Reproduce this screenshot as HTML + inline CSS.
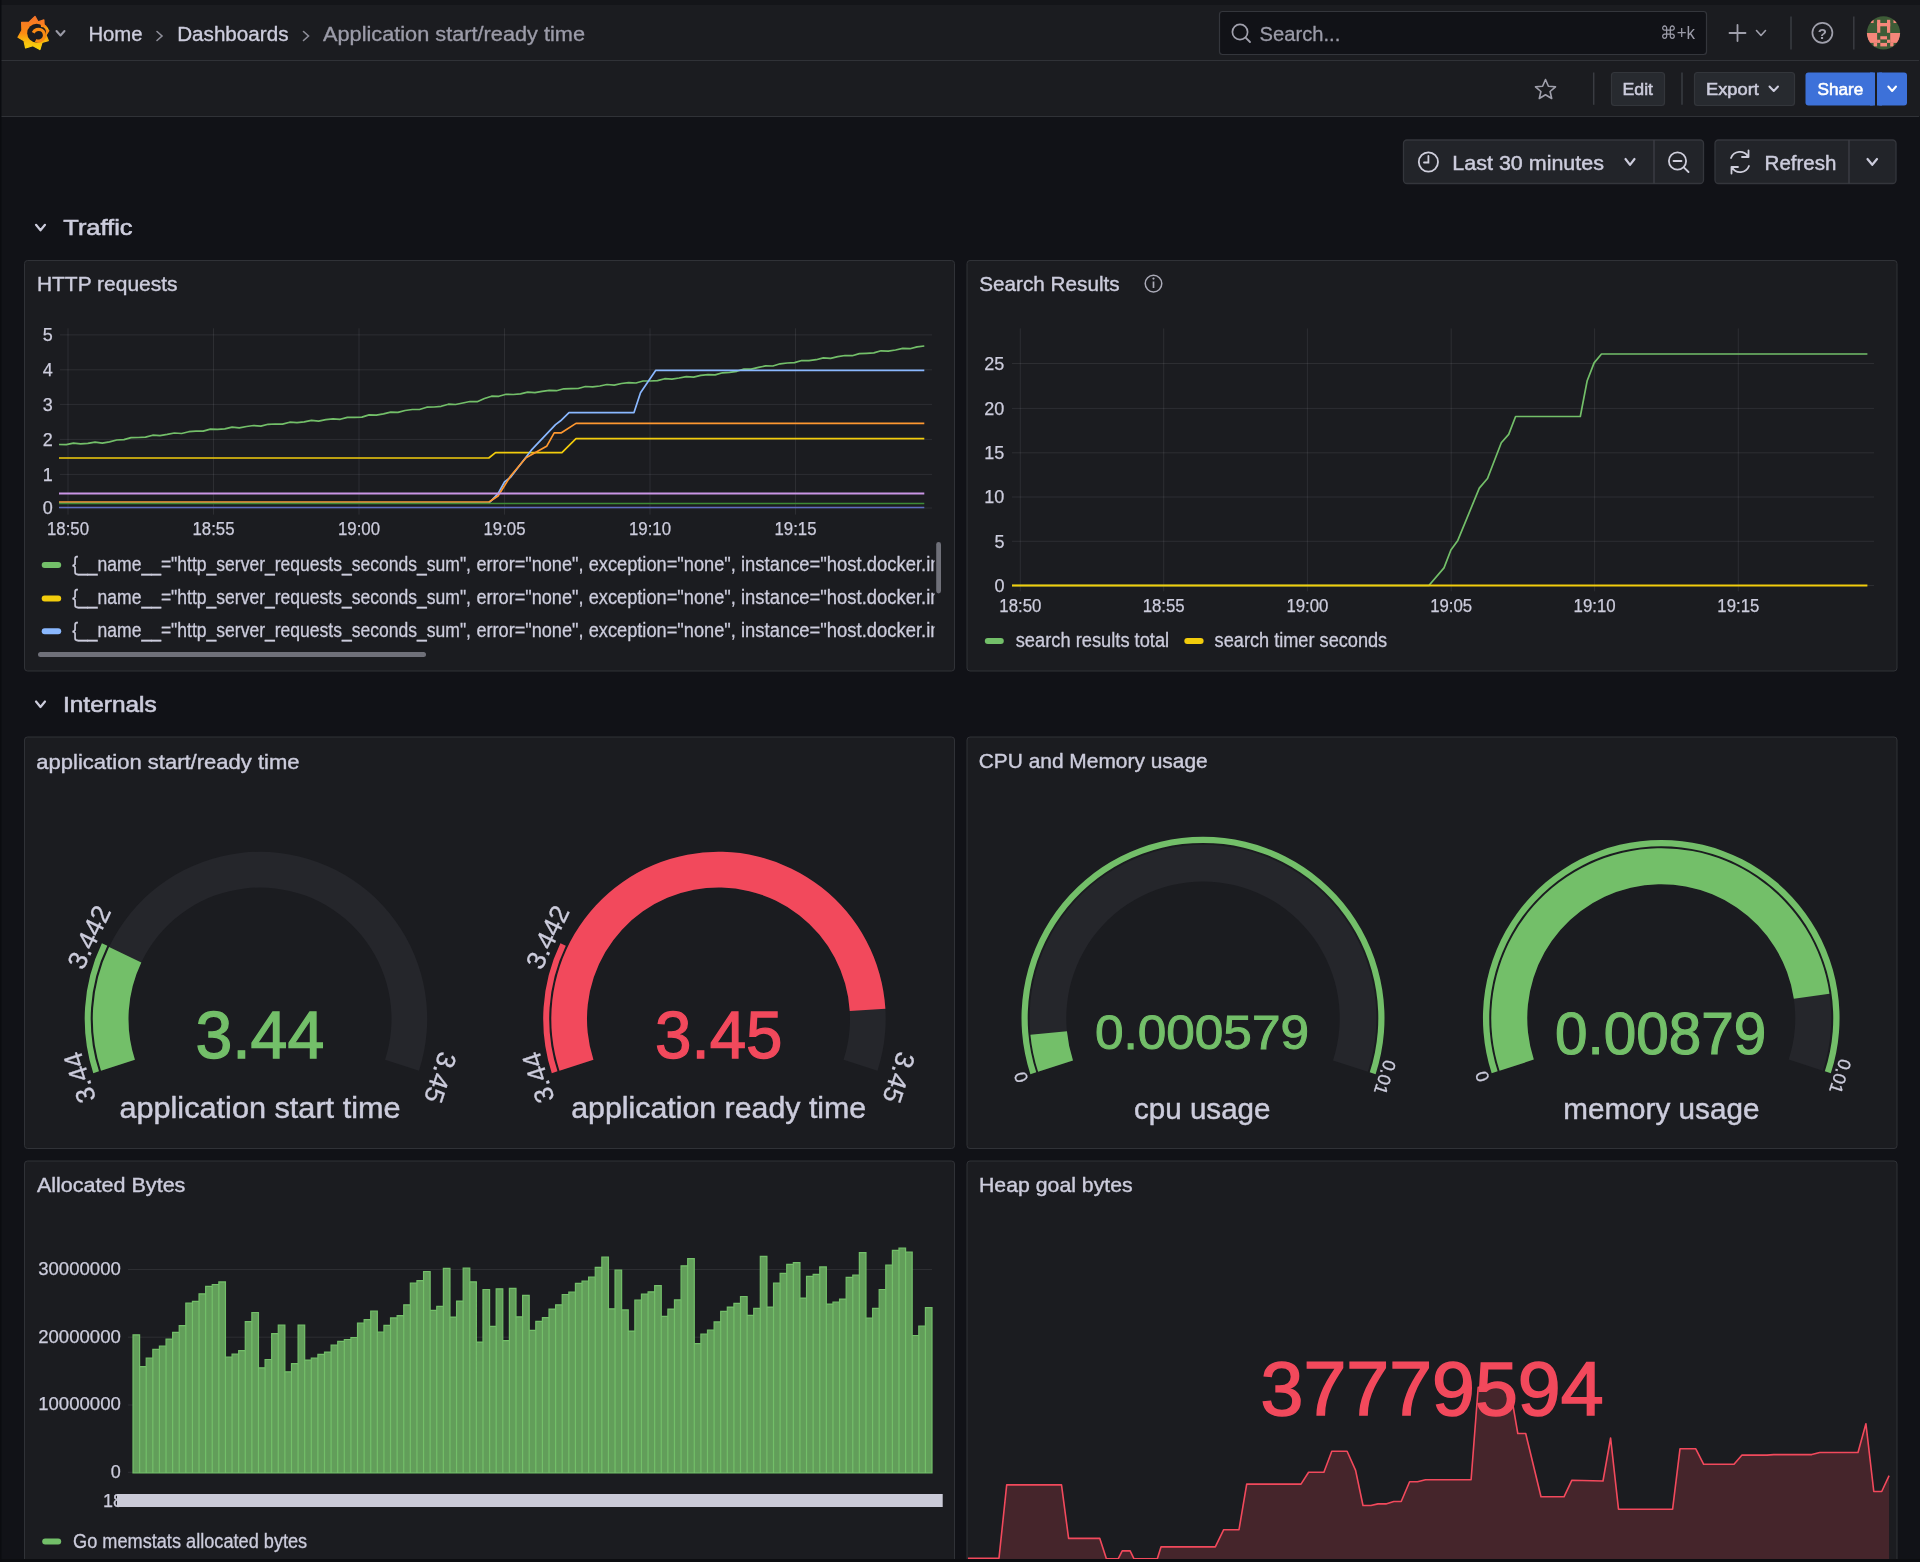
<!DOCTYPE html>
<html><head><meta charset="utf-8"><title>Application start/ready time - Dashboards - Grafana</title>
<style>
html,body{margin:0;padding:0;background:#111217;width:1920px;height:1562px;overflow:hidden}
svg{display:block;font-family:"Liberation Sans", sans-serif;will-change:transform}
</style></head>
<body>
<svg width="1920" height="1562" viewBox="0 0 1920 1562">
<rect x="0" y="0" width="1920" height="1562" fill="#111217" />
<rect x="0" y="0" width="1920" height="61" fill="#1b1c20" />
<rect x="0" y="0" width="1920" height="5" fill="#141519" />
<line x1="0" y1="60.5" x2="1919" y2="60.5" stroke="#303237" stroke-width="1" />
<rect x="0" y="61" width="1920" height="55.5" fill="#1b1c20" />
<line x1="0" y1="116.5" x2="1919" y2="116.5" stroke="#303237" stroke-width="1" />
<defs>
<linearGradient id="lg" x1="0" y1="1" x2="0" y2="0">
<stop offset="0" stop-color="#f8d80c"/><stop offset="0.3" stop-color="#f9b40e"/><stop offset="0.5" stop-color="#fb8a12"/><stop offset="1" stop-color="#f7742a"/>
</linearGradient>
<clipPath id="avc"><circle cx="1883.5" cy="32.9" r="16.6"/></clipPath>
</defs>
<polygon points="35.0,16.4 38.1,21.9 43.9,19.9 44.2,26.9 48.9,30.6 46.0,35.1 48.3,40.6 42.0,42.5 39.9,49.6 32.9,45.7 25.6,48.0 24.0,40.8 18.0,37.2 21.9,30.3 21.6,22.3 29.2,22.0" fill="url(#lg)" stroke="url(#lg)" stroke-width="1.2" stroke-linejoin="round"/>
<circle cx="36.6" cy="33.2" r="9.4" fill="#1b1c20"/>
<path d="M40.5,22.6 Q47.5,24.5 48.9,30.8 Q45.5,27.2 41,27 Z" fill="url(#lg)"/>
<path d="M31.80,32.03 A7.5,7.5 0 1 1 34.85,41.70 L36.45,38.92 A4.3,4.3 0 1 0 34.70,33.38 Z" fill="#f98a14"/>
<polyline points="56.5,31 60.5,35.5 64.5,31" fill="none" stroke="#9a9aa6" stroke-width="2" stroke-linecap="round" stroke-linejoin="round"/>
<text x="88.4" y="40.9" font-size="20.5" fill="#ccccdc" textLength="54.2" lengthAdjust="spacingAndGlyphs" stroke="#ccccdc" stroke-width="0.35" >Home</text>
<polyline points="157,31.5 162,36 157,40.5" fill="none" stroke="#8e8e99" stroke-width="1.6" stroke-linecap="round"/>
<text x="177.2" y="40.9" font-size="20.5" fill="#ccccdc" textLength="111.3" lengthAdjust="spacingAndGlyphs" stroke="#ccccdc" stroke-width="0.35" >Dashboards</text>
<polyline points="303.5,31.5 308.5,36 303.5,40.5" fill="none" stroke="#8e8e99" stroke-width="1.6" stroke-linecap="round"/>
<text x="323.0" y="40.9" font-size="20.5" fill="#9b9ba8" textLength="262.0" lengthAdjust="spacingAndGlyphs" stroke="#9b9ba8" stroke-width="0.35" >Application start/ready time</text>
<rect x="1219.5" y="11.5" width="487" height="43" fill="#111217" rx="3" stroke="#34363c" stroke-width="1.2" />
<circle cx="1240" cy="32" r="7.6" fill="none" stroke="#a0a0ac" stroke-width="1.7"/>
<line x1="1245.6" y1="37.6" x2="1250" y2="42" stroke="#a0a0ac" stroke-width="1.8" stroke-linecap="round"/>
<text x="1259.6" y="40.5" font-size="20.5" fill="#9b9ba8" textLength="80.7" lengthAdjust="spacingAndGlyphs" stroke="#9b9ba8" stroke-width="0.3" >Search...</text>
<text x="1659.7" y="39.4" font-size="18" fill="#9b9ba8" textLength="35.3" lengthAdjust="spacingAndGlyphs" >⌘+k</text>
<line x1="1729.5" y1="33" x2="1745.5" y2="33" stroke="#a0a0ac" stroke-width="1.8" stroke-linecap="round"/>
<line x1="1737.5" y1="25" x2="1737.5" y2="41" stroke="#a0a0ac" stroke-width="1.8" stroke-linecap="round"/>
<polyline points="1756.5,30.5 1761.0,35.5 1765.5,30.5" fill="none" stroke="#a0a0ac" stroke-width="1.6" stroke-linecap="round" stroke-linejoin="round"/>
<line x1="1791" y1="16.5" x2="1791" y2="49.5" stroke="#3a3c42" stroke-width="1.5" />
<circle cx="1822.4" cy="32.8" r="10" fill="none" stroke="#a0a0ac" stroke-width="1.7"/>
<text x="1822.4" y="38.6" font-size="15" fill="#a0a0ac" text-anchor="middle" font-weight="bold">?</text>
<line x1="1853.8" y1="16.5" x2="1853.8" y2="49.5" stroke="#3a3c42" stroke-width="1.5" />
<g clip-path="url(#avc)">
<rect x="1866" y="15" width="36" height="36" fill="#3e5c37" />
<rect x="1877.1" y="19.8" width="3.2" height="13.0" fill="#f6877a" />
<rect x="1887" y="19.8" width="3.2" height="13.0" fill="#f6877a" />
<rect x="1877.1" y="23" width="13.1" height="3.3" fill="#f6877a" />
<rect x="1870.3" y="19.8" width="3.3" height="3.2" fill="#f6877a" />
<rect x="1893.5" y="19.8" width="3.5" height="3.2" fill="#f6877a" />
<rect x="1866" y="33" width="11.1" height="9.9" fill="#f6877a" />
<rect x="1877.1" y="39.7" width="3.2" height="3.2" fill="#f6877a" />
<rect x="1873.6" y="42.9" width="3.5" height="3.5" fill="#f6877a" />
<rect x="1890.2" y="33" width="10.8" height="9.9" fill="#f6877a" />
<rect x="1887" y="39.7" width="3.2" height="3.2" fill="#f6877a" />
<rect x="1890.2" y="42.9" width="3.3" height="3.5" fill="#f6877a" />
<rect x="1880.3" y="36.2" width="6.7" height="3.2" fill="#f6877a" />
<rect x="1880.3" y="42.9" width="6.7" height="3.5" fill="#f6877a" />
</g>
<polygon points="1545.5,79.5 1548.4,86.2 1555.5,86.8 1550.1,91.5 1551.7,98.5 1545.5,94.8 1539.3,98.5 1540.9,91.5 1535.5,86.8 1542.6,86.2" fill="none" stroke="#a0a0ac" stroke-width="1.6" stroke-linejoin="round"/>
<line x1="1593.7" y1="72.5" x2="1593.7" y2="104.8" stroke="#3a3c42" stroke-width="1.5" />
<rect x="1611.5" y="72.5" width="53" height="33" fill="#272a2f" rx="3" stroke="#33363b" stroke-width="1.2" />
<text x="1622.5" y="94.8" font-size="17" fill="#ccccdc" textLength="30.5" lengthAdjust="spacingAndGlyphs" stroke="#ccccdc" stroke-width="0.55" >Edit</text>
<line x1="1682" y1="72.5" x2="1682" y2="104.8" stroke="#3a3c42" stroke-width="1.5" />
<rect x="1694.5" y="72.5" width="100" height="33" fill="#272a2f" rx="3" stroke="#33363b" stroke-width="1.2" />
<text x="1706.0" y="94.8" font-size="17" fill="#ccccdc" textLength="52.8" lengthAdjust="spacingAndGlyphs" stroke="#ccccdc" stroke-width="0.55" >Export</text>
<polyline points="1769.5,86.5 1773.75,91 1778,86.5" fill="none" stroke="#ccccdc" stroke-width="2" stroke-linecap="round" stroke-linejoin="round"/>
<rect x="1805.5" y="72.5" width="69.5" height="33" fill="#3d71d9" rx="3" />
<rect x="1870" y="72.5" width="5" height="33" fill="#3d71d9" />
<rect x="1877" y="72.5" width="30" height="33" fill="#3d71d9" rx="3" />
<rect x="1877" y="72.5" width="5" height="33" fill="#3d71d9" />
<text x="1817.5" y="94.8" font-size="17" fill="#ffffff" textLength="45.9" lengthAdjust="spacingAndGlyphs" stroke="#ffffff" stroke-width="0.55" >Share</text>
<polyline points="1888.3,86.5 1892.15,91 1896,86.5" fill="none" stroke="#ffffff" stroke-width="2" stroke-linecap="round" stroke-linejoin="round"/>
<rect x="1403.5" y="140" width="300" height="43.5" fill="#222429" rx="3.5" stroke="#34363c" stroke-width="1.3" />
<line x1="1654" y1="140" x2="1654" y2="183.5" stroke="#3c3e45" stroke-width="1.4" />
<circle cx="1428.4" cy="162" r="9.6" fill="none" stroke="#cfcfdc" stroke-width="1.8"/>
<polyline points="1428.4,156 1428.4,162.5 1424,162.5" fill="none" stroke="#cfcfdc" stroke-width="1.8" stroke-linecap="round"/>
<text x="1452.3" y="170.0" font-size="20.5" fill="#ccccdc" textLength="151.7" lengthAdjust="spacingAndGlyphs" stroke="#ccccdc" stroke-width="0.45" >Last 30 minutes</text>
<polyline points="1625.5,159 1630.0,164.8 1634.5,159" fill="none" stroke="#ccccdc" stroke-width="2.2" stroke-linecap="round" stroke-linejoin="round"/>
<circle cx="1677.5" cy="161" r="8.6" fill="none" stroke="#cfcfdc" stroke-width="1.8"/>
<line x1="1673.5" y1="161" x2="1681.5" y2="161" stroke="#cfcfdc" stroke-width="1.8" stroke-linecap="round"/>
<line x1="1683.8" y1="167.3" x2="1688.5" y2="172" stroke="#cfcfdc" stroke-width="1.9" stroke-linecap="round"/>
<rect x="1715" y="140" width="181" height="43.5" fill="#222429" rx="3.5" stroke="#34363c" stroke-width="1.3" />
<line x1="1849" y1="140" x2="1849" y2="183.5" stroke="#3c3e45" stroke-width="1.4" />
<path d="M1731,158 A9.5,9.5 0 0 1 1748,156.5 M1748.5,150.5 L1748.5,157 L1742,157 M1749,166 A9.5,9.5 0 0 1 1732,167.5 M1731.5,173.5 L1731.5,167 L1738,167" fill="none" stroke="#cfcfdc" stroke-width="1.8" stroke-linecap="round" stroke-linejoin="round"/>
<text x="1764.6" y="170.0" font-size="20.5" fill="#ccccdc" textLength="71.8" lengthAdjust="spacingAndGlyphs" stroke="#ccccdc" stroke-width="0.45" >Refresh</text>
<polyline points="1867.5,159 1872.25,164.8 1877,159" fill="none" stroke="#ccccdc" stroke-width="2.2" stroke-linecap="round" stroke-linejoin="round"/>
<polyline points="36,224.8 40.5,230.3 45,224.8" fill="none" stroke="#ccccdc" stroke-width="2.2" stroke-linecap="round" stroke-linejoin="round"/>
<text x="63.3" y="234.8" font-size="22.5" fill="#ccccdc" textLength="69.2" lengthAdjust="spacingAndGlyphs" stroke="#ccccdc" stroke-width="0.6" >Traffic</text>
<polyline points="36,701.5 40.5,707 45,701.5" fill="none" stroke="#ccccdc" stroke-width="2.2" stroke-linecap="round" stroke-linejoin="round"/>
<text x="63.0" y="711.9" font-size="22.5" fill="#ccccdc" textLength="93.7" lengthAdjust="spacingAndGlyphs" stroke="#ccccdc" stroke-width="0.6" >Internals</text>
<rect x="24.5" y="260.5" width="930" height="410.5" fill="#1b1c20" rx="3" stroke="#303237" stroke-width="1" />
<rect x="967.0" y="260.5" width="930" height="410.5" fill="#1b1c20" rx="3" stroke="#303237" stroke-width="1" />
<rect x="24.5" y="737.0" width="930" height="411.5" fill="#1b1c20" rx="3" stroke="#303237" stroke-width="1" />
<rect x="967.0" y="737.0" width="930" height="411.5" fill="#1b1c20" rx="3" stroke="#303237" stroke-width="1" />
<rect x="24.5" y="1161.0" width="930" height="419" fill="#1b1c20" rx="3" stroke="#303237" stroke-width="1" />
<rect x="967.0" y="1161.0" width="930" height="419" fill="#1b1c20" rx="3" stroke="#303237" stroke-width="1" />
<text x="36.9" y="290.7" font-size="20.9" fill="#ccccdc" textLength="140.6" lengthAdjust="spacingAndGlyphs" stroke="#ccccdc" stroke-width="0.4" >HTTP requests</text>
<text x="979.3" y="291.3" font-size="20.9" fill="#ccccdc" textLength="140.3" lengthAdjust="spacingAndGlyphs" stroke="#ccccdc" stroke-width="0.4" >Search Results</text>
<circle cx="1153.5" cy="283.6" r="8.3" fill="none" stroke="#a9a9b6" stroke-width="1.5"/>
<line x1="1153.5" y1="281.5" x2="1153.5" y2="288" stroke="#a9a9b6" stroke-width="1.7" />
<circle cx="1153.5" cy="278.6" r="1.1" fill="#a9a9b6"/>
<text x="36.3" y="769.0" font-size="20.9" fill="#ccccdc" textLength="263.3" lengthAdjust="spacingAndGlyphs" stroke="#ccccdc" stroke-width="0.4" >application start/ready time</text>
<text x="978.7" y="768.0" font-size="20.9" fill="#ccccdc" textLength="229.0" lengthAdjust="spacingAndGlyphs" stroke="#ccccdc" stroke-width="0.4" >CPU and Memory usage</text>
<text x="36.9" y="1192.2" font-size="20.9" fill="#ccccdc" textLength="148.5" lengthAdjust="spacingAndGlyphs" stroke="#ccccdc" stroke-width="0.4" >Allocated Bytes</text>
<text x="979.0" y="1192.2" font-size="20.9" fill="#ccccdc" textLength="153.7" lengthAdjust="spacingAndGlyphs" stroke="#ccccdc" stroke-width="0.4" >Heap goal bytes</text>
<line x1="59.9" y1="334.9" x2="932" y2="334.9" stroke="rgba(204,204,220,0.10)" stroke-width="1" />
<line x1="59.9" y1="369.8" x2="932" y2="369.8" stroke="rgba(204,204,220,0.10)" stroke-width="1" />
<line x1="59.9" y1="404.4" x2="932" y2="404.4" stroke="rgba(204,204,220,0.10)" stroke-width="1" />
<line x1="59.9" y1="439.4" x2="932" y2="439.4" stroke="rgba(204,204,220,0.10)" stroke-width="1" />
<line x1="59.9" y1="474.4" x2="932" y2="474.4" stroke="rgba(204,204,220,0.10)" stroke-width="1" />
<line x1="59.9" y1="508" x2="932" y2="508" stroke="rgba(204,204,220,0.10)" stroke-width="1" />
<line x1="68" y1="328.3" x2="68" y2="514.6" stroke="rgba(204,204,220,0.10)" stroke-width="1" />
<line x1="213.5" y1="328.3" x2="213.5" y2="514.6" stroke="rgba(204,204,220,0.10)" stroke-width="1" />
<line x1="359" y1="328.3" x2="359" y2="514.6" stroke="rgba(204,204,220,0.10)" stroke-width="1" />
<line x1="504.5" y1="328.3" x2="504.5" y2="514.6" stroke="rgba(204,204,220,0.10)" stroke-width="1" />
<line x1="650" y1="328.3" x2="650" y2="514.6" stroke="rgba(204,204,220,0.10)" stroke-width="1" />
<line x1="795.5" y1="328.3" x2="795.5" y2="514.6" stroke="rgba(204,204,220,0.10)" stroke-width="1" />
<text x="52.8" y="341.1" font-size="18" fill="#ccccdc" text-anchor="end" stroke="#ccccdc" stroke-width="0.25" >5</text>
<text x="52.8" y="376.0" font-size="18" fill="#ccccdc" text-anchor="end" stroke="#ccccdc" stroke-width="0.25" >4</text>
<text x="52.8" y="410.6" font-size="18" fill="#ccccdc" text-anchor="end" stroke="#ccccdc" stroke-width="0.25" >3</text>
<text x="52.8" y="445.6" font-size="18" fill="#ccccdc" text-anchor="end" stroke="#ccccdc" stroke-width="0.25" >2</text>
<text x="52.8" y="480.6" font-size="18" fill="#ccccdc" text-anchor="end" stroke="#ccccdc" stroke-width="0.25" >1</text>
<text x="52.8" y="514.2" font-size="18" fill="#ccccdc" text-anchor="end" stroke="#ccccdc" stroke-width="0.25" >0</text>
<text x="68.0" y="534.7" font-size="18" fill="#ccccdc" textLength="42.0" lengthAdjust="spacingAndGlyphs" text-anchor="middle" stroke="#ccccdc" stroke-width="0.25" >18:50</text>
<text x="213.5" y="534.7" font-size="18" fill="#ccccdc" textLength="42.0" lengthAdjust="spacingAndGlyphs" text-anchor="middle" stroke="#ccccdc" stroke-width="0.25" >18:55</text>
<text x="359.0" y="534.7" font-size="18" fill="#ccccdc" textLength="42.0" lengthAdjust="spacingAndGlyphs" text-anchor="middle" stroke="#ccccdc" stroke-width="0.25" >19:00</text>
<text x="504.5" y="534.7" font-size="18" fill="#ccccdc" textLength="42.0" lengthAdjust="spacingAndGlyphs" text-anchor="middle" stroke="#ccccdc" stroke-width="0.25" >19:05</text>
<text x="650.0" y="534.7" font-size="18" fill="#ccccdc" textLength="42.0" lengthAdjust="spacingAndGlyphs" text-anchor="middle" stroke="#ccccdc" stroke-width="0.25" >19:10</text>
<text x="795.5" y="534.7" font-size="18" fill="#ccccdc" textLength="42.0" lengthAdjust="spacingAndGlyphs" text-anchor="middle" stroke="#ccccdc" stroke-width="0.25" >19:15</text>
<polyline points="59.0,444.5 66.2,444.7 73.4,443.1 80.6,443.9 87.8,443.3 95.1,442.2 102.3,443.1 109.5,441.9 116.7,440.0 123.9,439.6 131.1,437.6 138.3,437.5 145.5,437.1 152.7,435.2 160.0,435.6 167.2,434.4 174.4,433.0 181.6,433.5 188.8,431.7 196.0,431.1 203.2,431.1 210.4,429.1 217.6,429.3 224.8,428.8 232.1,427.1 239.3,427.8 246.5,426.5 253.7,425.5 260.9,426.1 268.1,424.3 275.3,424.0 282.5,424.1 289.7,422.2 297.0,422.6 304.2,421.9 311.4,420.4 318.6,421.1 325.8,419.6 333.0,418.8 340.2,419.3 347.4,417.4 354.6,417.4 361.9,417.1 369.1,414.9 376.3,415.1 383.5,413.8 390.7,412.1 397.9,412.4 405.1,410.5 412.3,409.5 419.5,409.5 426.8,407.2 434.0,407.0 441.2,406.3 448.4,404.2 455.6,404.5 462.8,403.0 470.0,401.5 477.2,401.7 484.4,398.5 491.6,396.2 498.9,396.3 506.1,394.3 513.3,394.5 520.5,393.8 527.7,392.2 534.9,392.7 542.1,391.3 549.3,390.3 556.5,390.7 563.8,388.8 571.0,388.6 578.2,388.5 585.4,386.5 592.6,386.9 599.8,386.0 607.0,384.5 614.2,385.1 621.4,383.5 628.7,382.7 635.9,383.0 643.1,381.0 650.3,381.0 657.5,380.6 664.7,378.7 671.9,379.1 679.1,378.0 686.3,376.6 693.6,377.1 700.8,375.4 708.0,374.7 715.2,374.9 722.4,372.8 729.6,372.4 736.8,371.3 744.0,369.0 751.2,369.1 758.5,367.4 765.7,365.9 772.9,366.0 780.1,363.8 787.3,363.0 794.5,362.6 801.7,360.5 808.9,360.6 816.1,359.7 823.3,357.9 830.6,358.3 837.8,356.6 845.0,355.5 852.2,355.7 859.4,353.6 866.6,353.3 873.8,352.9 881.0,350.8 888.2,351.1 895.5,350.0 902.7,348.3 909.9,348.7 917.1,346.9 924.3,346.0" fill="none" stroke="#73bf69" stroke-width="1.7" stroke-linejoin="round" />
<polyline points="59.0,458.0 488.8,458.0 495.5,452.7 561.9,452.7 576.0,438.7 924.3,438.7" fill="none" stroke="#f2cc0c" stroke-width="1.7" stroke-linejoin="round" />
<polyline points="59.0,503.0 489.0,503.0 498.0,493.6 504.5,482.0 510.8,477.0 531.3,450.2 555.5,424.6 560.6,420.8 569.0,412.6 634.0,412.6 640.5,392.7 655.8,370.3 924.3,370.3" fill="none" stroke="#8ab8ff" stroke-width="1.7" stroke-linejoin="round" />
<polyline points="59.0,502.0 489.0,502.0 498.0,496.0 510.8,475.7 526.0,457.8 546.6,446.3 554.2,432.8 561.4,432.8 576.0,423.4 924.3,423.4" fill="none" stroke="#ff9830" stroke-width="1.7" stroke-linejoin="round" />
<polyline points="59.0,493.5 924.3,493.5" fill="none" stroke="#ca95e5" stroke-width="1.8" stroke-linejoin="round" />
<polyline points="59.0,503.5 924.3,503.5" fill="none" stroke="#3e8a36" stroke-width="1.5" stroke-linejoin="round" />
<polyline points="59.0,507.6 924.3,507.6" fill="none" stroke="#5f6dbf" stroke-width="1.5" stroke-linejoin="round" />
<defs><clipPath id="lgclip"><rect x="30" y="540" width="904.5" height="110"/></clipPath></defs>
<g clip-path="url(#lgclip)">
<rect x="41.7" y="562" width="19.5" height="6" fill="#73bf69" rx="3" />
<text x="72.2" y="571.0" font-size="20" fill="#ccccdc" textLength="398.8" lengthAdjust="spacingAndGlyphs" stroke="#ccccdc" stroke-width="0.3" >{__name__=&quot;http_server_requests_seconds_sum&quot;,</text>
<text x="476.4" y="571.0" font-size="20" fill="#ccccdc" textLength="107.1" lengthAdjust="spacingAndGlyphs" stroke="#ccccdc" stroke-width="0.3" >error=&quot;none&quot;,</text>
<text x="588.7" y="571.0" font-size="20" fill="#ccccdc" textLength="147.1" lengthAdjust="spacingAndGlyphs" stroke="#ccccdc" stroke-width="0.3" >exception=&quot;none&quot;,</text>
<text x="741.0" y="571.0" font-size="20" fill="#ccccdc" textLength="199.5" lengthAdjust="spacingAndGlyphs" stroke="#ccccdc" stroke-width="0.3" >instance=&quot;host.docker.in</text>
<rect x="41.7" y="595.4" width="19.5" height="6" fill="#f2cc0c" rx="3" />
<text x="72.2" y="604.4" font-size="20" fill="#ccccdc" textLength="398.8" lengthAdjust="spacingAndGlyphs" stroke="#ccccdc" stroke-width="0.3" >{__name__=&quot;http_server_requests_seconds_sum&quot;,</text>
<text x="476.4" y="604.4" font-size="20" fill="#ccccdc" textLength="107.1" lengthAdjust="spacingAndGlyphs" stroke="#ccccdc" stroke-width="0.3" >error=&quot;none&quot;,</text>
<text x="588.7" y="604.4" font-size="20" fill="#ccccdc" textLength="147.1" lengthAdjust="spacingAndGlyphs" stroke="#ccccdc" stroke-width="0.3" >exception=&quot;none&quot;,</text>
<text x="741.0" y="604.4" font-size="20" fill="#ccccdc" textLength="199.5" lengthAdjust="spacingAndGlyphs" stroke="#ccccdc" stroke-width="0.3" >instance=&quot;host.docker.in</text>
<rect x="41.7" y="628.2" width="19.5" height="6" fill="#8ab8ff" rx="3" />
<text x="72.2" y="637.2" font-size="20" fill="#ccccdc" textLength="398.8" lengthAdjust="spacingAndGlyphs" stroke="#ccccdc" stroke-width="0.3" >{__name__=&quot;http_server_requests_seconds_sum&quot;,</text>
<text x="476.4" y="637.2" font-size="20" fill="#ccccdc" textLength="107.1" lengthAdjust="spacingAndGlyphs" stroke="#ccccdc" stroke-width="0.3" >error=&quot;none&quot;,</text>
<text x="588.7" y="637.2" font-size="20" fill="#ccccdc" textLength="147.1" lengthAdjust="spacingAndGlyphs" stroke="#ccccdc" stroke-width="0.3" >exception=&quot;none&quot;,</text>
<text x="741.0" y="637.2" font-size="20" fill="#ccccdc" textLength="199.5" lengthAdjust="spacingAndGlyphs" stroke="#ccccdc" stroke-width="0.3" >instance=&quot;host.docker.in</text>
</g>
<rect x="936.2" y="542" width="4.8" height="51.4" fill="#6f7079" rx="2.4" />
<rect x="38" y="652" width="388" height="5" fill="#6f7079" rx="2.5" />
<line x1="1012" y1="363.5" x2="1874" y2="363.5" stroke="rgba(204,204,220,0.10)" stroke-width="1" />
<line x1="1012" y1="408.4" x2="1874" y2="408.4" stroke="rgba(204,204,220,0.10)" stroke-width="1" />
<line x1="1012" y1="452.8" x2="1874" y2="452.8" stroke="rgba(204,204,220,0.10)" stroke-width="1" />
<line x1="1012" y1="497" x2="1874" y2="497" stroke="rgba(204,204,220,0.10)" stroke-width="1" />
<line x1="1012" y1="541.3" x2="1874" y2="541.3" stroke="rgba(204,204,220,0.10)" stroke-width="1" />
<line x1="1012" y1="585.5" x2="1874" y2="585.5" stroke="rgba(204,204,220,0.10)" stroke-width="1" />
<line x1="1020.3" y1="328.4" x2="1020.3" y2="591.3" stroke="rgba(204,204,220,0.10)" stroke-width="1" />
<line x1="1163.7" y1="328.4" x2="1163.7" y2="591.3" stroke="rgba(204,204,220,0.10)" stroke-width="1" />
<line x1="1307.4" y1="328.4" x2="1307.4" y2="591.3" stroke="rgba(204,204,220,0.10)" stroke-width="1" />
<line x1="1451.2" y1="328.4" x2="1451.2" y2="591.3" stroke="rgba(204,204,220,0.10)" stroke-width="1" />
<line x1="1594.6" y1="328.4" x2="1594.6" y2="591.3" stroke="rgba(204,204,220,0.10)" stroke-width="1" />
<line x1="1738.3" y1="328.4" x2="1738.3" y2="591.3" stroke="rgba(204,204,220,0.10)" stroke-width="1" />
<text x="1004.4" y="369.7" font-size="18" fill="#ccccdc" text-anchor="end" stroke="#ccccdc" stroke-width="0.25" >25</text>
<text x="1004.4" y="414.6" font-size="18" fill="#ccccdc" text-anchor="end" stroke="#ccccdc" stroke-width="0.25" >20</text>
<text x="1004.4" y="459.0" font-size="18" fill="#ccccdc" text-anchor="end" stroke="#ccccdc" stroke-width="0.25" >15</text>
<text x="1004.4" y="503.2" font-size="18" fill="#ccccdc" text-anchor="end" stroke="#ccccdc" stroke-width="0.25" >10</text>
<text x="1004.4" y="547.5" font-size="18" fill="#ccccdc" text-anchor="end" stroke="#ccccdc" stroke-width="0.25" >5</text>
<text x="1004.4" y="591.7" font-size="18" fill="#ccccdc" text-anchor="end" stroke="#ccccdc" stroke-width="0.25" >0</text>
<text x="1020.3" y="611.6" font-size="18" fill="#ccccdc" textLength="42.0" lengthAdjust="spacingAndGlyphs" text-anchor="middle" stroke="#ccccdc" stroke-width="0.25" >18:50</text>
<text x="1163.7" y="611.6" font-size="18" fill="#ccccdc" textLength="42.0" lengthAdjust="spacingAndGlyphs" text-anchor="middle" stroke="#ccccdc" stroke-width="0.25" >18:55</text>
<text x="1307.4" y="611.6" font-size="18" fill="#ccccdc" textLength="42.0" lengthAdjust="spacingAndGlyphs" text-anchor="middle" stroke="#ccccdc" stroke-width="0.25" >19:00</text>
<text x="1451.2" y="611.6" font-size="18" fill="#ccccdc" textLength="42.0" lengthAdjust="spacingAndGlyphs" text-anchor="middle" stroke="#ccccdc" stroke-width="0.25" >19:05</text>
<text x="1594.6" y="611.6" font-size="18" fill="#ccccdc" textLength="42.0" lengthAdjust="spacingAndGlyphs" text-anchor="middle" stroke="#ccccdc" stroke-width="0.25" >19:10</text>
<text x="1738.3" y="611.6" font-size="18" fill="#ccccdc" textLength="42.0" lengthAdjust="spacingAndGlyphs" text-anchor="middle" stroke="#ccccdc" stroke-width="0.25" >19:15</text>
<polyline points="1012.0,585.5 1428.9,585.5 1444.0,567.9 1450.9,550.0 1457.8,540.4 1479.3,488.1 1487.5,478.5 1501.3,442.7 1508.7,434.4 1515.6,416.5 1580.3,416.5 1587.2,380.7 1594.1,362.9 1601.5,354.0 1867.4,354.0" fill="none" stroke="#73bf69" stroke-width="1.7" stroke-linejoin="round" />
<polyline points="1012.0,585.5 1867.4,585.5" fill="none" stroke="#f2cc0c" stroke-width="2" stroke-linejoin="round" />
<rect x="984.8" y="638" width="19" height="6" fill="#73bf69" rx="3" />
<text x="1015.7" y="647.3" font-size="20" fill="#ccccdc" textLength="153.5" lengthAdjust="spacingAndGlyphs" stroke="#ccccdc" stroke-width="0.3" >search results total</text>
<rect x="1184.3" y="638" width="19.3" height="6" fill="#f2cc0c" rx="3" />
<text x="1214.6" y="647.3" font-size="20" fill="#ccccdc" textLength="172.6" lengthAdjust="spacingAndGlyphs" stroke="#ccccdc" stroke-width="0.3" >search timer seconds</text>
<path d="M100.98,1070.67 A167.2,167.2 0 1 1 419.02,1070.67 L385.06,1059.64 A131.5,131.5 0 1 0 134.94,1059.64 Z" fill="#25262b"/>
<path d="M100.98,1070.67 A167.2,167.2 0 0 1 109.09,947.02 L141.31,962.39 A131.5,131.5 0 0 0 134.94,1059.64 Z" fill="#73bf69"/>
<path d="M93.28,1073.17 A175.3,175.3 0 0 1 101.91,943.26 L107.32,945.85 A169.3,169.3 0 0 0 98.99,1071.32 Z" fill="#73bf69"/>
<text transform="translate(79.8,1077.6) rotate(252.0)" font-size="26.5" fill="#ccccdc" stroke="#ccccdc" stroke-width="0.3" text-anchor="middle" dominant-baseline="central">3.44</text>
<text transform="translate(89.1,937.1) rotate(295.6)" font-size="26.5" fill="#ccccdc" stroke="#ccccdc" stroke-width="0.3" text-anchor="middle" dominant-baseline="central">3.442</text>
<text transform="translate(440.2,1077.6) rotate(108.0)" font-size="26.5" fill="#ccccdc" stroke="#ccccdc" stroke-width="0.3" text-anchor="middle" dominant-baseline="central">3.45</text>
<text x="195.4" y="1058.3" font-size="66" fill="#73bf69" textLength="128.8" lengthAdjust="spacingAndGlyphs" stroke="#73bf69" stroke-width="1.32" >3.44</text>
<text x="119.4" y="1118.0" font-size="29" fill="#ccccdc" textLength="281.2" lengthAdjust="spacingAndGlyphs" stroke="#ccccdc" stroke-width="0.45" >application start time</text>
<path d="M559.48,1070.67 A167.2,167.2 0 1 1 877.52,1070.67 L843.56,1059.64 A131.5,131.5 0 1 0 593.44,1059.64 Z" fill="#25262b"/>
<path d="M559.48,1070.67 A167.2,167.2 0 1 1 885.39,1008.79 L849.75,1010.97 A131.5,131.5 0 1 0 593.44,1059.64 Z" fill="#f2495c"/>
<path d="M551.78,1073.17 A175.3,175.3 0 0 1 560.41,943.26 L565.82,945.85 A169.3,169.3 0 0 0 557.49,1071.32 Z" fill="#f2495c"/>
<text transform="translate(538.3,1077.6) rotate(252.0)" font-size="26.5" fill="#ccccdc" stroke="#ccccdc" stroke-width="0.3" text-anchor="middle" dominant-baseline="central">3.44</text>
<text transform="translate(547.6,937.1) rotate(295.6)" font-size="26.5" fill="#ccccdc" stroke="#ccccdc" stroke-width="0.3" text-anchor="middle" dominant-baseline="central">3.442</text>
<text transform="translate(898.7,1077.6) rotate(108.0)" font-size="26.5" fill="#ccccdc" stroke="#ccccdc" stroke-width="0.3" text-anchor="middle" dominant-baseline="central">3.45</text>
<text x="655.0" y="1058.3" font-size="66" fill="#f2495c" textLength="127.5" lengthAdjust="spacingAndGlyphs" stroke="#f2495c" stroke-width="1.32" >3.45</text>
<text x="571.2" y="1118.0" font-size="29" fill="#ccccdc" textLength="295.0" lengthAdjust="spacingAndGlyphs" stroke="#ccccdc" stroke-width="0.45" >application ready time</text>
<path d="M1038.09,1071.78 A173.4,173.4 0 1 1 1367.91,1071.78 L1333.01,1060.44 A136.7,136.7 0 1 0 1072.99,1060.44 Z" fill="#25262b"/>
<path d="M1038.09,1071.78 A173.4,173.4 0 0 1 1030.40,1034.82 L1066.93,1031.30 A136.7,136.7 0 0 0 1072.99,1060.44 Z" fill="#73bf69"/>
<path d="M1030.38,1074.29 A181.5,181.5 0 1 1 1375.62,1074.29 L1369.72,1072.37 A175.3,175.3 0 1 0 1036.28,1072.37 Z" fill="#73bf69"/>
<text transform="translate(1021.3,1077.2) rotate(252.0)" font-size="18" fill="#ccccdc" stroke="#ccccdc" stroke-width="0.3" text-anchor="middle" dominant-baseline="central">0</text>
<text transform="translate(1384.7,1077.2) rotate(108.0)" font-size="18" fill="#ccccdc" stroke="#ccccdc" stroke-width="0.3" text-anchor="middle" dominant-baseline="central">0.01</text>
<text x="1094.9" y="1049.3" font-size="49" fill="#73bf69" textLength="214.1" lengthAdjust="spacingAndGlyphs" stroke="#73bf69" stroke-width="0.98" >0.000579</text>
<text x="1134.0" y="1118.7" font-size="29" fill="#ccccdc" textLength="136.5" lengthAdjust="spacingAndGlyphs" stroke="#ccccdc" stroke-width="0.45" >cpu usage</text>
<path d="M1499.57,1070.73 A170,170 0 1 1 1822.93,1070.73 L1788.69,1059.61 A134,134 0 1 0 1533.81,1059.61 Z" fill="#25262b"/>
<path d="M1499.57,1070.73 A170,170 0 1 1 1829.47,993.66 L1793.85,998.86 A134,134 0 1 0 1533.81,1059.61 Z" fill="#73bf69"/>
<path d="M1491.68,1073.30 A178.3,178.3 0 1 1 1830.82,1073.30 L1824.83,1071.35 A172,172 0 1 0 1497.67,1071.35 Z" fill="#73bf69"/>
<text transform="translate(1482.5,1076.3) rotate(252.0)" font-size="18" fill="#ccccdc" stroke="#ccccdc" stroke-width="0.3" text-anchor="middle" dominant-baseline="central">0</text>
<text transform="translate(1840.0,1076.3) rotate(108.0)" font-size="18" fill="#ccccdc" stroke="#ccccdc" stroke-width="0.3" text-anchor="middle" dominant-baseline="central">0.01</text>
<text x="1555.0" y="1053.8" font-size="59" fill="#73bf69" textLength="211.2" lengthAdjust="spacingAndGlyphs" stroke="#73bf69" stroke-width="1.18" >0.00879</text>
<text x="1563.2" y="1118.8" font-size="29" fill="#ccccdc" textLength="196.2" lengthAdjust="spacingAndGlyphs" stroke="#ccccdc" stroke-width="0.45" >memory usage</text>
<line x1="128" y1="1269.5" x2="932" y2="1269.5" stroke="rgba(204,204,220,0.10)" stroke-width="1" />
<line x1="128" y1="1337.2" x2="932" y2="1337.2" stroke="rgba(204,204,220,0.10)" stroke-width="1" />
<line x1="128" y1="1405" x2="932" y2="1405" stroke="rgba(204,204,220,0.10)" stroke-width="1" />
<line x1="128" y1="1472.3" x2="932" y2="1472.3" stroke="rgba(204,204,220,0.10)" stroke-width="1" />
<text x="120.8" y="1274.9" font-size="18" fill="#ccccdc" textLength="82.6" lengthAdjust="spacingAndGlyphs" text-anchor="end" stroke="#ccccdc" stroke-width="0.25" >30000000</text>
<text x="120.8" y="1342.6" font-size="18" fill="#ccccdc" textLength="82.6" lengthAdjust="spacingAndGlyphs" text-anchor="end" stroke="#ccccdc" stroke-width="0.25" >20000000</text>
<text x="120.8" y="1410.4" font-size="18" fill="#ccccdc" textLength="82.6" lengthAdjust="spacingAndGlyphs" text-anchor="end" stroke="#ccccdc" stroke-width="0.25" >10000000</text>
<text x="120.8" y="1477.7" font-size="18" fill="#ccccdc" text-anchor="end" stroke="#ccccdc" stroke-width="0.25" >0</text>
<path d="M133.00,1472.8 V1334.8 H139.60 V1472.8 Z M139.60,1472.8 V1366.7 H146.21 V1472.8 Z M146.21,1472.8 V1358.0 H152.81 V1472.8 Z M152.81,1472.8 V1349.4 H159.41 V1472.8 Z M159.41,1472.8 V1346.0 H166.02 V1472.8 Z M166.02,1472.8 V1339.1 H172.62 V1472.8 Z M172.62,1472.8 V1332.3 H179.22 V1472.8 Z M179.22,1472.8 V1325.6 H185.83 V1472.8 Z M185.83,1472.8 V1303.0 H192.43 V1472.8 Z M192.43,1472.8 V1301.4 H199.03 V1472.8 Z M199.03,1472.8 V1293.8 H205.64 V1472.8 Z M205.64,1472.8 V1286.4 H212.24 V1472.8 Z M212.24,1472.8 V1284.5 H218.84 V1472.8 Z M218.84,1472.8 V1281.9 H225.45 V1472.8 Z M225.45,1472.8 V1357.0 H232.05 V1472.8 Z M232.05,1472.8 V1354.0 H238.65 V1472.8 Z M238.65,1472.8 V1350.6 H245.26 V1472.8 Z M245.26,1472.8 V1321.7 H251.86 V1472.8 Z M251.86,1472.8 V1312.5 H258.46 V1472.8 Z M258.46,1472.8 V1367.8 H265.07 V1472.8 Z M265.07,1472.8 V1359.5 H271.67 V1472.8 Z M271.67,1472.8 V1333.7 H278.27 V1472.8 Z M278.27,1472.8 V1325.0 H284.88 V1472.8 Z M284.88,1472.8 V1371.8 H291.48 V1472.8 Z M291.48,1472.8 V1363.7 H298.08 V1472.8 Z M298.08,1472.8 V1325.0 H304.69 V1472.8 Z M304.69,1472.8 V1360.1 H311.29 V1472.8 Z M311.29,1472.8 V1358.0 H317.89 V1472.8 Z M317.89,1472.8 V1354.4 H324.50 V1472.8 Z M324.50,1472.8 V1352.1 H331.10 V1472.8 Z M331.10,1472.8 V1345.2 H337.70 V1472.8 Z M337.70,1472.8 V1341.4 H344.31 V1472.8 Z M344.31,1472.8 V1339.5 H350.91 V1472.8 Z M350.91,1472.8 V1337.5 H357.51 V1472.8 Z M357.51,1472.8 V1323.0 H364.12 V1472.8 Z M364.12,1472.8 V1319.6 H370.72 V1472.8 Z M370.72,1472.8 V1311.0 H377.32 V1472.8 Z M377.32,1472.8 V1332.2 H383.93 V1472.8 Z M383.93,1472.8 V1325.3 H390.53 V1472.8 Z M390.53,1472.8 V1317.9 H397.13 V1472.8 Z M397.13,1472.8 V1315.6 H403.74 V1472.8 Z M403.74,1472.8 V1304.8 H410.34 V1472.8 Z M410.34,1472.8 V1283.0 H416.94 V1472.8 Z M416.94,1472.8 V1280.7 H423.55 V1472.8 Z M423.55,1472.8 V1271.5 H430.15 V1472.8 Z M430.15,1472.8 V1310.4 H436.75 V1472.8 Z M436.75,1472.8 V1306.4 H443.36 V1472.8 Z M443.36,1472.8 V1268.4 H449.96 V1472.8 Z M449.96,1472.8 V1317.1 H456.56 V1472.8 Z M456.56,1472.8 V1301.1 H463.17 V1472.8 Z M463.17,1472.8 V1268.0 H469.77 V1472.8 Z M469.77,1472.8 V1281.8 H476.37 V1472.8 Z M476.37,1472.8 V1342.1 H482.98 V1472.8 Z M482.98,1472.8 V1289.5 H489.58 V1472.8 Z M489.58,1472.8 V1326.3 H496.18 V1472.8 Z M496.18,1472.8 V1288.8 H502.79 V1472.8 Z M502.79,1472.8 V1340.6 H509.39 V1472.8 Z M509.39,1472.8 V1288.4 H515.99 V1472.8 Z M515.99,1472.8 V1316.8 H522.60 V1472.8 Z M522.60,1472.8 V1295.3 H529.20 V1472.8 Z M529.20,1472.8 V1330.3 H535.80 V1472.8 Z M535.80,1472.8 V1321.4 H542.40 V1472.8 Z M542.40,1472.8 V1317.6 H549.01 V1472.8 Z M549.01,1472.8 V1309.1 H555.61 V1472.8 Z M555.61,1472.8 V1304.8 H562.21 V1472.8 Z M562.21,1472.8 V1294.5 H568.82 V1472.8 Z M568.82,1472.8 V1292.2 H575.42 V1472.8 Z M575.42,1472.8 V1283.3 H582.02 V1472.8 Z M582.02,1472.8 V1281.2 H588.63 V1472.8 Z M588.63,1472.8 V1277.2 H595.23 V1472.8 Z M595.23,1472.8 V1267.3 H601.83 V1472.8 Z M601.83,1472.8 V1257.2 H608.44 V1472.8 Z M608.44,1472.8 V1308.8 H615.04 V1472.8 Z M615.04,1472.8 V1270.0 H621.64 V1472.8 Z M621.64,1472.8 V1309.9 H628.25 V1472.8 Z M628.25,1472.8 V1331.1 H634.85 V1472.8 Z M634.85,1472.8 V1300.2 H641.45 V1472.8 Z M641.45,1472.8 V1294.2 H648.06 V1472.8 Z M648.06,1472.8 V1291.8 H654.66 V1472.8 Z M654.66,1472.8 V1285.6 H661.26 V1472.8 Z M661.26,1472.8 V1316.3 H667.87 V1472.8 Z M667.87,1472.8 V1309.1 H674.47 V1472.8 Z M674.47,1472.8 V1299.9 H681.07 V1472.8 Z M681.07,1472.8 V1265.8 H687.68 V1472.8 Z M687.68,1472.8 V1258.7 H694.28 V1472.8 Z M694.28,1472.8 V1343.7 H700.88 V1472.8 Z M700.88,1472.8 V1334.2 H707.49 V1472.8 Z M707.49,1472.8 V1330.2 H714.09 V1472.8 Z M714.09,1472.8 V1321.9 H720.69 V1472.8 Z M720.69,1472.8 V1311.4 H727.30 V1472.8 Z M727.30,1472.8 V1307.1 H733.90 V1472.8 Z M733.90,1472.8 V1303.3 H740.50 V1472.8 Z M740.50,1472.8 V1296.5 H747.11 V1472.8 Z M747.11,1472.8 V1315.3 H753.71 V1472.8 Z M753.71,1472.8 V1308.4 H760.31 V1472.8 Z M760.31,1472.8 V1256.4 H766.92 V1472.8 Z M766.92,1472.8 V1307.1 H773.52 V1472.8 Z M773.52,1472.8 V1283.0 H780.12 V1472.8 Z M780.12,1472.8 V1273.3 H786.73 V1472.8 Z M786.73,1472.8 V1264.3 H793.33 V1472.8 Z M793.33,1472.8 V1262.6 H799.93 V1472.8 Z M799.93,1472.8 V1298.1 H806.54 V1472.8 Z M806.54,1472.8 V1276.4 H813.14 V1472.8 Z M813.14,1472.8 V1274.3 H819.74 V1472.8 Z M819.74,1472.8 V1266.9 H826.35 V1472.8 Z M826.35,1472.8 V1304.1 H832.95 V1472.8 Z M832.95,1472.8 V1302.2 H839.55 V1472.8 Z M839.55,1472.8 V1299.1 H846.16 V1472.8 Z M846.16,1472.8 V1277.3 H852.76 V1472.8 Z M852.76,1472.8 V1275.0 H859.36 V1472.8 Z M859.36,1472.8 V1252.6 H865.97 V1472.8 Z M865.97,1472.8 V1318.0 H872.57 V1472.8 Z M872.57,1472.8 V1308.4 H879.17 V1472.8 Z M879.17,1472.8 V1289.5 H885.78 V1472.8 Z M885.78,1472.8 V1265.0 H892.38 V1472.8 Z M892.38,1472.8 V1250.4 H898.98 V1472.8 Z M898.98,1472.8 V1248.0 H905.59 V1472.8 Z M905.59,1472.8 V1252.0 H912.19 V1472.8 Z M912.19,1472.8 V1335.5 H918.79 V1472.8 Z M918.79,1472.8 V1326.0 H925.40 V1472.8 Z M925.40,1472.8 V1307.6 H932.00 V1472.8 Z" fill="#629e5a" stroke="#73bf69" stroke-width="1.2"/>
<text x="102.9" y="1507.0" font-size="18" fill="#ccccdc" stroke="#ccccdc" stroke-width="0.25" >18</text>
<rect x="117" y="1494" width="825.7" height="13" fill="#cbcbd8" />
<rect x="42.2" y="1538.6" width="19" height="6" fill="#73bf69" rx="3" />
<text x="73.0" y="1548.0" font-size="20" fill="#ccccdc" textLength="234.2" lengthAdjust="spacingAndGlyphs" stroke="#ccccdc" stroke-width="0.3" >Go memstats allocated bytes</text>
<defs><clipPath id="p6c"><rect x="967.5" y="1161" width="930" height="398"/></clipPath></defs>
<g clip-path="url(#p6c)">
<polygon points="967.9,1558.2 999.0,1558.2 1006.7,1484.9 1061.5,1484.9 1068.6,1538.4 1099.8,1538.4 1106.4,1558.8 1118.2,1558.8 1122.2,1550.9 1130.1,1550.9 1134.0,1558.8 1157.3,1558.8 1161.0,1546.9 1215.3,1546.9 1223.7,1529.7 1239.0,1529.7 1246.7,1484.1 1301.0,1484.1 1308.6,1472.3 1323.9,1472.3 1331.8,1451.2 1347.1,1451.2 1355.6,1470.4 1363.0,1505.5 1370.9,1505.5 1378.0,1503.9 1385.9,1503.9 1393.8,1501.5 1401.2,1501.5 1409.6,1481.7 1417.5,1481.7 1425.5,1479.7 1471.1,1479.7 1478.2,1387.3 1509.9,1387.3 1517.8,1433.5 1525.7,1433.5 1541.0,1496.8 1564.0,1496.8 1571.9,1480.2 1603.0,1481.0 1610.6,1438.0 1618.5,1509.2 1672.6,1509.2 1680.0,1448.8 1695.8,1448.8 1703.7,1464.3 1734.0,1464.3 1742.0,1455.1 1767.0,1455.1 1773.6,1454.6 1811.8,1454.6 1819.7,1452.5 1858.0,1452.5 1865.9,1423.7 1873.8,1491.5 1881.7,1491.5 1889.1,1475.7 1889.1,1562.0 967.9,1562.0" fill="rgba(242,73,92,0.2)"/>
<text x="1260.6" y="1415.0" font-size="76" fill="#f2495c" textLength="342.9" lengthAdjust="spacingAndGlyphs" stroke="#f2495c" stroke-width="1.6" >37779594</text>
<polyline points="967.9,1558.2 999.0,1558.2 1006.7,1484.9 1061.5,1484.9 1068.6,1538.4 1099.8,1538.4 1106.4,1558.8 1118.2,1558.8 1122.2,1550.9 1130.1,1550.9 1134.0,1558.8 1157.3,1558.8 1161.0,1546.9 1215.3,1546.9 1223.7,1529.7 1239.0,1529.7 1246.7,1484.1 1301.0,1484.1 1308.6,1472.3 1323.9,1472.3 1331.8,1451.2 1347.1,1451.2 1355.6,1470.4 1363.0,1505.5 1370.9,1505.5 1378.0,1503.9 1385.9,1503.9 1393.8,1501.5 1401.2,1501.5 1409.6,1481.7 1417.5,1481.7 1425.5,1479.7 1471.1,1479.7 1478.2,1387.3 1509.9,1387.3 1517.8,1433.5 1525.7,1433.5 1541.0,1496.8 1564.0,1496.8 1571.9,1480.2 1603.0,1481.0 1610.6,1438.0 1618.5,1509.2 1672.6,1509.2 1680.0,1448.8 1695.8,1448.8 1703.7,1464.3 1734.0,1464.3 1742.0,1455.1 1767.0,1455.1 1773.6,1454.6 1811.8,1454.6 1819.7,1452.5 1858.0,1452.5 1865.9,1423.7 1873.8,1491.5 1881.7,1491.5 1889.1,1475.7" fill="none" stroke="#f2495c" stroke-width="1.6" stroke-linejoin="round" />
</g>
<rect x="0" y="1559" width="1920" height="3" fill="#0c0d10" />
<rect x="0" y="0" width="1.5" height="1562" fill="#0b0c10" />
</svg>
</body></html>
